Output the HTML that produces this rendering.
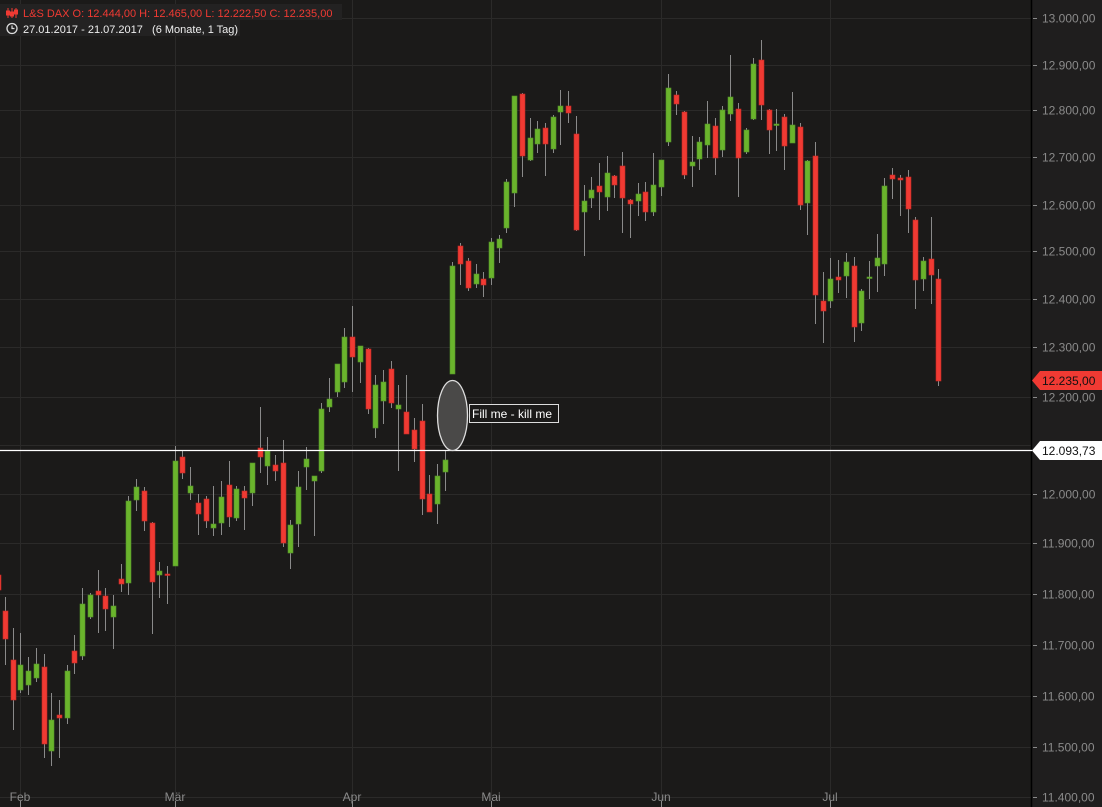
<!DOCTYPE html>
<html><head><meta charset="utf-8"><style>
html,body{margin:0;padding:0;background:#1b1a19;width:1102px;height:807px;overflow:hidden}
svg{display:block;font-family:"Liberation Sans",sans-serif}
</style></head><body>
<svg id="s" width="1102" height="807" xmlns="http://www.w3.org/2000/svg">
<rect width="1102" height="807" fill="#1b1a19"/>
<rect x="1032" y="0" width="70" height="807" fill="#1f1e1e"/>
<g id="grid" stroke="#2b2a29" stroke-width="1"></g>
<g id="candles"></g>
<line x1="1031.5" y1="0" x2="1031.5" y2="807" stroke="#000" stroke-width="1.5"/>
<g id="axis" font-size="12" fill="#8a8a8a"></g>
<line x1="0" y1="450.5" x2="1032" y2="450.5" stroke="#fff" stroke-width="1.2"/>
<path d="M1032,450.5 L1040,441 L1102,441 L1102,460 L1040,460 Z" fill="#fff"/>
<text x="1042" y="455" font-size="12" fill="#111">12.093,73</text>
<path d="M1032,380.5 L1040,371 L1102,371 L1102,390 L1040,390 Z" fill="#f03a33"/>
<text x="1042" y="385" font-size="12" fill="#111">12.235,00</text>
<ellipse cx="452.5" cy="415.5" rx="15" ry="35" fill="#4a4948" stroke="#ddd" stroke-width="1.3"/>
<rect x="469.5" y="404.5" width="89" height="18" fill="#1b1a19" stroke="#ddd"/>
<text x="472" y="418" font-size="12" fill="#fff">Fill me - kill me</text>
<rect x="0" y="4" width="342" height="16" fill="#232222"/>
<rect x="0" y="20" width="240" height="16" fill="#232222"/>
<g fill="#f03a33" stroke="#f03a33">
<line x1="8" y1="8" x2="8" y2="18"/><rect x="6.5" y="11" width="3" height="4"/>
<line x1="12" y1="8" x2="12" y2="18"/><rect x="10.5" y="12" width="3" height="4"/>
<line x1="16" y1="8" x2="16" y2="18"/><rect x="14.5" y="10" width="3" height="4"/>
</g>
<text x="23" y="17" font-size="11" fill="#f03a33">L&amp;S DAX  O: 12.444,00  H: 12.465,00  L: 12.222,50  C: 12.235,00</text>
<circle cx="12" cy="28.5" r="5" fill="none" stroke="#ddd" stroke-width="1.3"/>
<path d="M12,25.5 V28.5 H14.5" fill="none" stroke="#ddd" stroke-width="1.2"/>
<text x="23" y="33" font-size="11" fill="#eee" xml:space="preserve">27.01.2017 - 21.07.2017   (6 Monate, 1 Tag)</text>
</svg>
<script>
var NS="http://www.w3.org/2000/svg";
function el(p,t,a,txt){var e=document.createElementNS(NS,t);for(var k in a)e.setAttribute(k,a[k]);if(txt)e.textContent=txt;p.appendChild(e);return e;}
var grid=document.getElementById('grid'),axis=document.getElementById('axis'),cg=document.getElementById('candles');
var lv=[[13000,18],[12900,65],[12800,110],[12700,157],[12600,205],[12500,251],[12400,299],[12300,347],[12200,397],[12100,445],[12000,494],[11900,543],[11800,594],[11700,645],[11600,696],[11500,747],[11400,797]];
function fmt(p){var s=String(p);return s.slice(0,2)+"."+s.slice(2)+",00";}
lv.forEach(function(l){var y=l[1]+0.5;el(grid,'line',{x1:0,y1:y,x2:1031,y2:y});
 if(l[0]!=12100){el(axis,'line',{x1:1033,y1:y,x2:1037,y2:y,stroke:'#8a8a8a'});el(axis,'text',{x:1042,y:l[1]+4.5},fmt(l[0]));}});
[[20,"Feb"],[175,"Mär"],[352,"Apr"],[491,"Mai"],[661,"Jun"],[830,"Jul"]].forEach(function(m){
 el(grid,'line',{x1:m[0]+0.5,y1:0,x2:m[0]+0.5,y2:807});
 el(axis,'line',{x1:m[0]+0.5,y1:801,x2:m[0]+0.5,y2:807,stroke:'#8a8a8a'});
 el(axis,'text',{x:m[0],y:801,'text-anchor':'middle'},m[1]);});
var d=[
[-2,575,590,575,600,'r'],[5,611,639,597,665,'r'],[13,660,700,628,730,'r'],[20,665,690,633,693,'g'],[28,671,685,657,695,'g'],[36,664,678,648,682,'g'],[44,667,744,654,758,'r'],[51,720,751,693,766,'g'],[59,715,718,700,758,'r'],[67,671,718,665,724,'g'],[74,651,663,635,674,'r'],[82,604,656,588,660,'g'],[90,595,617,593,619,'g'],[98,591,595,570,633,'r'],[105,596,609,588,631,'r'],[113,606,617,595,649,'g'],[121,579,584,564,592,'r'],[128,501,583,496,595,'g'],[136,487,500,479,511,'g'],[144,491,521,487,531,'r'],[152,523,582,522,634,'r'],[159,571,575,562,598,'g'],[167,574,574,566,604,'r'],[175,461,566,446,566,'g'],[182,457,473,451,479,'r'],[190,486,493,467,500,'g'],[198,503,514,494,535,'r'],[206,499,521,496,528,'r'],[213,524,528,486,536,'g'],[221,497,523,481,535,'g'],[229,485,517,461,527,'r'],[236,489,518,486,521,'g'],
[244,491,498,486,530,'r'],[252,463,493,463,506,'g'],[260,448,457,407,473,'r'],[267,451,466,437,485,'g'],[275,465,471,455,481,'r'],[283,463,543,440,547,'r'],[290,525,553,520,569,'g'],[298,487,524,471,547,'g'],[306,459,467,447,490,'g'],[314,476,481,476,536,'g'],[321,409,471,403,473,'g'],[329,399,407,378,412,'g'],[337,364,392,364,397,'g'],[344,337,382,328,388,'g'],[352,337,357,306,392,'r'],[360,346,362,346,383,'g'],[368,349,409,348,414,'r'],[375,385,428,375,438,'g'],[383,382,401,370,424,'g'],[391,369,403,361,408,'r'],[398,405,409,385,471,'g'],[406,412,434,375,434,'r'],[414,430,449,418,462,'r'],[422,421,499,404,515,'r'],[429,494,512,475,512,'r'],[437,476,504,464,524,'g'],[445,460,472,450,491,'g'],[452,266,374,262,374,'g'],[460,246,264,243,285,'r'],[468,261,288,258,291,'r'],[476,274,284,264,288,'g'],
[483,279,285,272,297,'r'],[491,242,278,238,285,'g'],[499,239,248,235,263,'g'],[506,182,228,179,233,'g'],[514,96,193,96,207,'g'],[522,94,156,93,177,'r'],[530,138,160,118,161,'g'],[537,129,144,121,153,'g'],[545,128,144,123,176,'r'],[553,117,149,115,153,'g'],[560,106,112,90,145,'g'],[568,106,113,91,123,'r'],[576,134,230,116,231,'r'],[584,201,212,185,256,'g'],[591,190,198,177,208,'g'],[599,186,192,163,220,'r'],[607,173,197,156,211,'g'],[614,176,185,175,198,'r'],[622,166,198,152,233,'r'],[630,200,204,199,238,'r'],[638,194,201,183,216,'g'],[645,192,212,182,221,'r'],[653,185,212,153,216,'g'],[661,160,187,160,196,'g'],[668,88,142,74,146,'g'],[676,95,104,91,115,'r'],[684,112,175,111,179,'r'],[692,162,166,136,187,'g'],[699,142,159,137,170,'g'],[707,124,145,101,158,'g'],[715,126,158,118,175,'r'],
[722,110,150,106,157,'g'],[730,97,114,55,121,'g'],[738,109,158,103,197,'r'],[746,130,152,128,154,'g'],[753,64,119,58,120,'g'],[761,60,105,40,120,'r'],[769,110,130,109,154,'r'],[776,124,124,109,151,'g'],[784,117,146,114,170,'r'],[792,125,143,92,143,'g'],[800,127,205,123,210,'r'],[807,161,203,160,235,'g'],[815,156,295,142,324,'r'],[823,301,311,272,343,'r'],[830,279,301,258,308,'g'],[838,277,280,260,293,'r'],[846,262,276,253,298,'g'],[854,266,327,257,342,'r'],[861,291,323,289,331,'g'],[869,277,277,261,299,'g'],[877,258,266,234,292,'g'],[884,186,264,178,276,'g'],[892,175,179,168,199,'r'],[900,178,180,175,216,'r'],[908,177,209,170,233,'r'],[915,220,280,217,309,'r'],[923,261,279,257,291,'g'],[931,259,275,217,304,'r'],[938,279,381,269,386,'r']];
d.forEach(function(c){var x=c[0]+0.5;
 el(cg,'line',{x1:x,y1:c[3],x2:x,y2:c[4],stroke:'#8a8a8a','stroke-width':1});
 var f=c[5]=='r'?'#f03a33':'#6ab42c',s=c[5]=='r'?'#c42a25':'#54922a';
 var h=Math.max(c[2]-c[1],1.5);
 el(cg,'rect',{x:c[0]-2,y:c[1],width:5,height:h,fill:f,stroke:s,'stroke-width':0.6});});
</script>
</body></html>
